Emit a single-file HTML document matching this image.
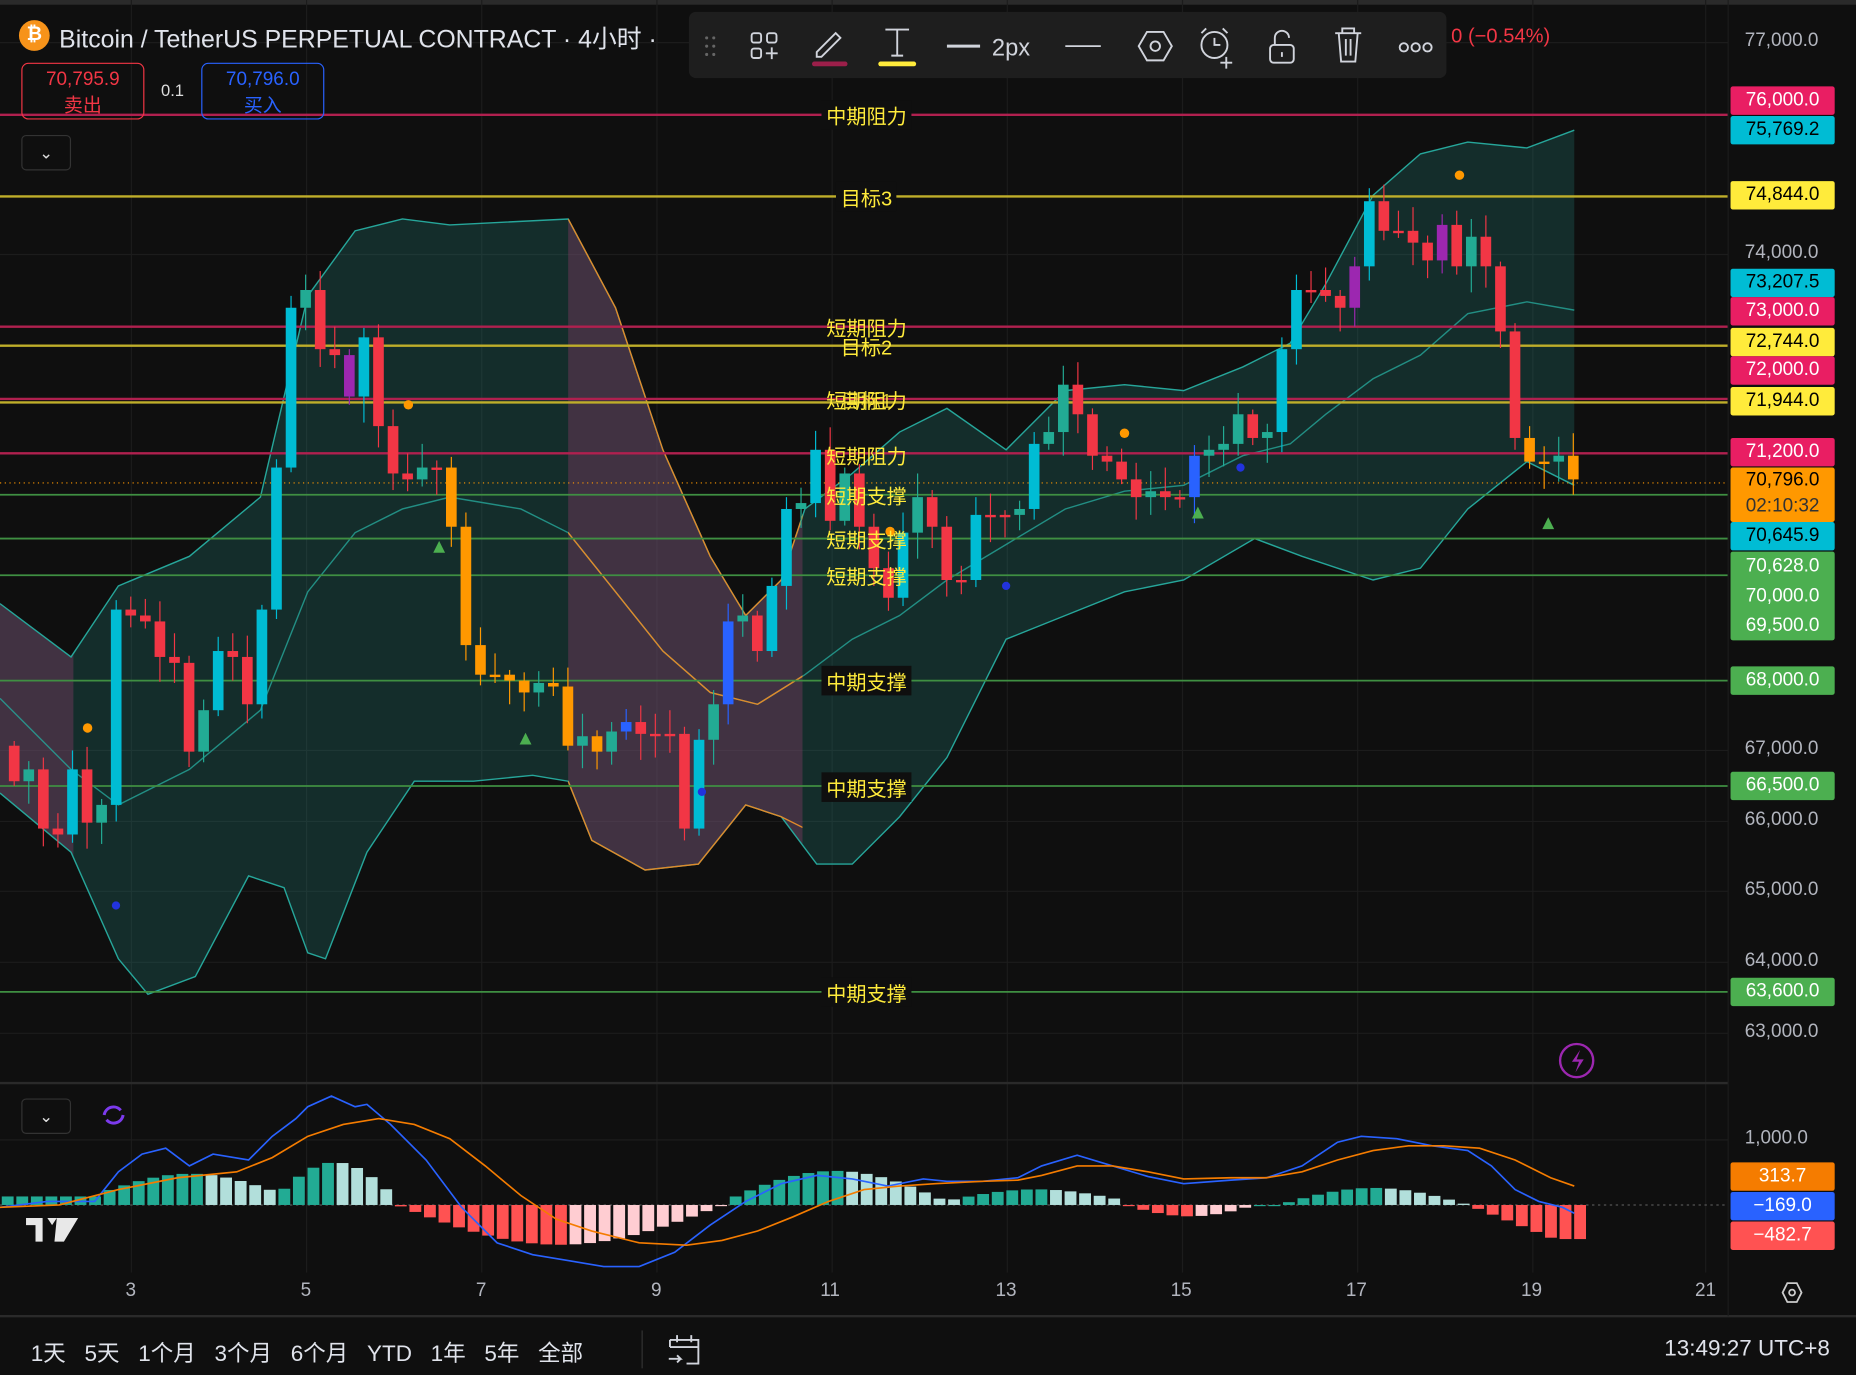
<!DOCTYPE html>
<html><head><meta charset="utf-8"><style>
html,body{margin:0;padding:0;background:#0f0f0f;overflow:hidden}
#w{position:absolute;left:0;top:0;width:1568px;height:1162px;transform:scale(1.18367);transform-origin:0 0;background:#0f0f0f;font-family:"Liberation Sans","Noto Sans CJK SC",sans-serif;color:#d1d4dc}
.t{position:absolute;white-space:nowrap}
.tag{position:absolute;left:1462px;width:88px;height:24px;font-size:16px;line-height:24px;text-align:center;border-radius:2px}
.ax{position:absolute;left:1474px;font-size:16px;color:#b2b5be}
.lb{position:absolute;font-size:17px;color:#ffeb3b;background:#0f0f0f;padding:0 4px;transform:translate(-50%,-50%)}
</style></head><body><div id="w">
<div style="position:absolute;left:0;top:0;width:1568px;height:4px;background:#2a2a2a"></div>
<svg id="s" width="1568" height="1162" style="position:absolute;left:0;top:0">
<g stroke="#1c1c1c" stroke-width="1">
<line x1="111" y1="0" x2="111" y2="1075"/><line x1="259" y1="0" x2="259" y2="1075"/><line x1="407" y1="0" x2="407" y2="1075"/><line x1="555" y1="0" x2="555" y2="1075"/><line x1="703" y1="0" x2="703" y2="1075"/><line x1="851" y1="0" x2="851" y2="1075"/><line x1="999" y1="0" x2="999" y2="1075"/><line x1="1147" y1="0" x2="1147" y2="1075"/><line x1="1295" y1="0" x2="1295" y2="1075"/><line x1="1441" y1="0" x2="1441" y2="1075"/>
<line x1="0" y1="36" x2="1460" y2="36"/><line x1="0" y1="215" x2="1460" y2="215"/><line x1="0" y1="634" x2="1460" y2="634"/><line x1="0" y1="694" x2="1460" y2="694"/><line x1="0" y1="753" x2="1460" y2="753"/><line x1="0" y1="813" x2="1460" y2="813"/><line x1="0" y1="873" x2="1460" y2="873"/><line x1="0" y1="963" x2="1460" y2="963"/>
</g>
<defs>
<clipPath id="pc"><rect x="0" y="0" width="62" height="900"/><rect x="480" y="0" width="198" height="900"/></clipPath>
<path id="band" d="M0,510 L60,555 L100,495 L160,470 L220,420 L260,250 L300,195 L340,185 L380,190 L480,185 L520,260 L560,380 L600,470 L630,520 L660,490 L680,430 L720,400 L760,365 L800,345 L850,380 L900,330 L950,325 L1000,330 L1050,310 L1090,290 L1120,240 L1160,165 L1200,130 L1240,120 L1290,125 L1330,110 L1330,410 L1290,390 L1240,430 L1200,480 L1160,490 L1100,470 L1060,455 L1000,490 L950,500 L900,520 L850,540 L800,640 L760,690 L720,730 L690,730 L660,690 L630,680 L590,730 L545,735 L500,710 L480,660 L450,655 L400,660 L350,660 L310,720 L275,810 L260,805 L240,750 L210,740 L165,825 L125,840 L100,810 L60,720 L0,670 Z"/>
</defs>
<use href="#band" fill="rgba(38,166,154,0.2)"/>
<use href="#band" fill="rgba(150,60,110,0.35)" clip-path="url(#pc)"/>
<g fill="none" stroke-width="1.2">
<path d="M0,510 L60,555 L100,495 L160,470 L220,420 L260,250 L300,195 L340,185 L380,190 L480,185 L520,260 L560,380 L600,470 L630,520 L660,490 L680,430 L720,400 L760,365 L800,345 L850,380 L900,330 L950,325 L1000,330 L1050,310 L1090,290 L1120,240 L1160,165 L1200,130 L1240,120 L1290,125 L1330,110" stroke="#26a69a"/>
<path d="M0,670 L60,720 L100,810 L125,840 L165,825 L210,740 L240,750 L260,805 L275,810 L310,720 L350,660 L400,660 L450,655 L480,660 L500,710 L545,735 L590,730 L630,680 L660,690 L690,730 L720,730 L760,690 L800,640 L850,540 L900,520 L950,500 L1000,490 L1060,455 L1100,470 L1160,490 L1200,480 L1240,430 L1290,390 L1330,410" stroke="#26a69a"/>
<path d="M0,590 L60,650 L100,680 L160,650 L220,600 L260,500 L300,450 L340,430 L380,420 L440,430 L480,450 L520,500 L560,550 L600,585 L640,595 L680,570 L720,540 L760,520 L800,490 L850,460 L900,430 L950,415 L1000,410 L1050,385 L1090,375 L1120,350 L1160,320 L1200,300 L1240,265 L1290,255 L1330,262" stroke="#26a69a" opacity="0.8"/>
<path d="M480,185 L520,260 L560,380 L600,470 L630,520 L660,490 L680,430 M480,660 L500,710 L545,735 L590,730 L630,680 L660,690 L680,700 M300,450 L340,430 L380,420 L440,430 L480,450 L520,500 L560,550 L600,585 L640,595 L680,570" stroke="#e08a2a" clip-path="url(#pc)"/>
</g>
<g stroke-width="2">
<line x1="0" y1="97" x2="1460" y2="97" stroke="#b0204f"/>
<line x1="0" y1="166" x2="1460" y2="166" stroke="#bfae2a"/>
<line x1="0" y1="276" x2="1460" y2="276" stroke="#b0204f"/>
<line x1="0" y1="292" x2="1460" y2="292" stroke="#bfae2a"/>
<line x1="0" y1="337" x2="1460" y2="337" stroke="#b0204f"/>
<line x1="0" y1="340" x2="1460" y2="340" stroke="#bfae2a"/>
<line x1="0" y1="383" x2="1460" y2="383" stroke="#b0204f"/>
<line x1="0" y1="418" x2="1460" y2="418" stroke="#3f8f42" stroke-width="1.5"/>
<line x1="0" y1="455" x2="1460" y2="455" stroke="#3f8f42" stroke-width="1.5"/>
<line x1="0" y1="486" x2="1460" y2="486" stroke="#3f8f42" stroke-width="1.5"/>
<line x1="0" y1="575" x2="1460" y2="575" stroke="#3f8f42" stroke-width="1.5"/>
<line x1="0" y1="664" x2="1460" y2="664" stroke="#3f8f42" stroke-width="1.5"/>
<line x1="0" y1="838" x2="1460" y2="838" stroke="#3f8f42" stroke-width="1.5"/>
<line x1="0" y1="408" x2="1460" y2="408" stroke="#ff9800" stroke-width="1" stroke-dasharray="1,3"/>
<line x1="0" y1="1018" x2="1460" y2="1018" stroke="#555" stroke-width="1" stroke-dasharray="2,3"/>
</g>
<g id="cd"></g>
<g id="mh"></g>
<path d="M0,1020 L40,1015 L80,1015 L100,990 L120,975 L140,970 L160,985 L180,975 L210,980 L230,960 L250,945 L260,935 L280,926 L300,935 L310,933 L330,950 L360,980 L390,1020 L420,1050 L450,1060 L480,1065 L510,1070 L540,1070 L570,1058 L600,1035 L630,1015 L660,1000 L690,993 L720,996 L750,1002 L780,996 L800,998 L830,998 L860,995 L880,985 L910,976 L940,985 L970,994 L1000,1000 L1040,997 L1070,995 L1100,985 L1130,965 L1150,960 L1180,962 L1210,968 L1240,972 L1260,985 L1280,1005 L1300,1015 L1320,1020 L1330,1025" fill="none" stroke="#2962ff" stroke-width="1.4"/>
<path d="M0,1020 L50,1018 L100,1005 L150,995 L200,990 L230,978 L260,960 L290,950 L320,945 L350,950 L380,962 L410,985 L440,1010 L470,1030 L500,1040 L540,1050 L580,1052 L610,1048 L640,1040 L670,1028 L700,1015 L730,1005 L760,1002 L790,1000 L830,998 L860,997 L880,993 L910,985 L940,985 L970,990 L1000,996 L1040,995 L1070,995 L1100,990 L1130,980 L1160,972 L1190,968 L1220,968 L1250,970 L1280,980 L1310,995 L1330,1002" fill="none" stroke="#f57c00" stroke-width="1.4"/>
<g fill="#4caf50"><path d="M371,457 l5,10 h-10z"/><path d="M444,619 l5,10 h-10z"/><path d="M1012,428 l5,10 h-10z"/><path d="M1308,437 l5,10 h-10z"/></g>
<g fill="#ff9800"><circle cx="74" cy="615" r="4"/><circle cx="345" cy="342" r="4"/><circle cx="950" cy="366" r="4"/><circle cx="1233" cy="148" r="4"/><circle cx="752" cy="449" r="4"/></g>
<g fill="#2233dd"><circle cx="98" cy="765" r="3.5"/><circle cx="593" cy="669" r="3.5"/><circle cx="850" cy="495" r="3.5"/><circle cx="1048" cy="395" r="3.5"/></g>
<line x1="0" y1="915" x2="1460" y2="915" stroke="#2a2a2a" stroke-width="2"/>
<line x1="0" y1="1112" x2="1568" y2="1112" stroke="#2a2a2a" stroke-width="2"/>
<line x1="1460" y1="0" x2="1460" y2="1112" stroke="#1c1c1c"/>
<circle cx="1332" cy="896" r="14" fill="none" stroke="#9c27b0" stroke-width="2"/>
<path d="M1335,887 l-7,10 h6 l-3,9 7,-11 h-6z" fill="#9c27b0"/>
<path d="M88,942 a8,8 0 0 1 14,-4 M104,942 a8,8 0 0 1 -14,4" stroke="#7c3aed" stroke-width="2.5" fill="none"/>
<path d="M22,1029 h14 v20 h-6 v-14 h-8z M40,1029 h8 l-4,6z M48,1029 h18 l-12,20 h-8z" fill="#e8e8e8"/>
<path d="M1506,1092 l4,-8 h8 l4,8 -4,8 h-8z" fill="none" stroke="#ccc" stroke-width="1.5"/><circle cx="1514" cy="1092" r="2.5" fill="none" stroke="#ccc" stroke-width="1.5"/>
</svg>
<div class="t" style="left:16px;top:17px;width:26px;height:26px;border-radius:13px;background:#f7931a;color:#fff;font-size:16px;line-height:26px;text-align:center;font-weight:bold">₿</div>
<div class="t" style="left:50px;top:17px;font-size:21px;color:#e0e3eb">Bitcoin / TetherUS PERPETUAL CONTRACT · 4小时 ·</div>
<div class="t" style="left:1226px;top:21px;font-size:17px;color:#f23645">0 (−0.54%)</div>
<div class="t" style="left:18px;top:53px;width:104px;height:48px;border:1px solid #f23645;border-radius:6px;color:#f23645;text-align:center;font-size:16px;line-height:22px;padding-top:3px;box-sizing:border-box">70,795.9<br>卖出</div>
<div class="t" style="left:136px;top:68px;font-size:14px;color:#ddd">0.1</div>
<div class="t" style="left:170px;top:53px;width:104px;height:48px;border:1px solid #2962ff;border-radius:6px;color:#2962ff;text-align:center;font-size:16px;line-height:22px;padding-top:3px;box-sizing:border-box">70,796.0<br>买入</div>
<div class="t" style="left:18px;top:114px;width:40px;height:28px;border:1px solid #333;border-radius:4px;text-align:center;color:#ddd;font-size:14px;line-height:28px">⌄</div>
<div class="t" style="left:18px;top:928px;width:40px;height:28px;border:1px solid #333;border-radius:4px;text-align:center;color:#ddd;font-size:14px;line-height:28px">⌄</div>
<div class="t" style="left:582px;top:10px;width:640px;height:56px;background:#1e1e1e;border-radius:6px"></div>
<svg width="640" height="56" style="position:absolute;left:582px;top:10px" fill="none" stroke="#d1d4dc" stroke-width="1.6">
<g fill="#666" stroke="none"><circle cx="15" cy="22" r="1.3"/><circle cx="21" cy="22" r="1.3"/><circle cx="15" cy="29" r="1.3"/><circle cx="21" cy="29" r="1.3"/><circle cx="15" cy="36" r="1.3"/><circle cx="21" cy="36" r="1.3"/></g>
<rect x="53" y="18" width="8" height="8" rx="2"/><rect x="66" y="18" width="8" height="8" rx="2"/><rect x="53" y="31" width="8" height="8" rx="2"/><path d="M70,30 v10 M65,35 h10"/>
<path d="M108,34 l16,-16 4,4 -16,16 h-4z"/><rect x="104" y="42" width="30" height="4" rx="2" fill="#9c1f4a" stroke="none"/>
<path d="M166,15 h20 M176,15 v22 M171,37 h10"/><rect x="160" y="42" width="32" height="4" rx="2" fill="#ffeb3b" stroke="none"/>
<path d="M218,29 h28" stroke-width="2.5"/>
<text x="256" y="37" fill="#d1d4dc" stroke="none" font-size="20" font-family="Liberation Sans">2px</text>
<path d="M318,29 h30" stroke-width="1.5"/>
<path d="M380,29 l7,-12 h14 l7,12 -7,12 h-14z"/><circle cx="394" cy="29" r="4"/>
<circle cx="444" cy="28" r="11"/><path d="M444,22 v6 h5 M433,18 l4,-4 M455,18 l-4,-4 M454,38 v10 M449,43 h10"/>
<rect x="491" y="28" width="20" height="15" rx="3"/><path d="M495,28 v-6 a6,6 0 0 1 12,0 M501,34 v4"/>
<path d="M546,18 h22 M552,18 v-4 h10 v4 M549,18 l2,24 h12 l2,-24 M555,23 v14 M559,23 v14"/>
<circle cx="604" cy="30" r="3.5"/><circle cx="614" cy="30" r="3.5"/><circle cx="624" cy="30" r="3.5"/>
</svg>
<div class="lb" style="left:732px;top:97px">中期阻力</div>
<div class="lb" style="left:732px;top:166px">目标3</div>
<div class="lb" style="left:732px;top:276px;background:none">短期阻力</div>
<div class="lb" style="left:732px;top:292px;background:none">目标2</div>
<div class="lb" style="left:732px;top:337px;background:none">短期阻力</div>
<div class="lb" style="left:732px;top:337px;background:none;opacity:.8">目标1</div>
<div class="lb" style="left:732px;top:384px;background:none">短期阻力</div>
<div class="lb" style="left:732px;top:418px;background:none">短期支撑</div>
<div class="lb" style="left:732px;top:455px;background:none">短期支撑</div>
<div class="lb" style="left:732px;top:486px;background:none">短期支撑</div>
<div class="lb" style="left:732px;top:575px">中期支撑</div>
<div class="lb" style="left:732px;top:665px">中期支撑</div>
<div class="lb" style="left:732px;top:838px">中期支撑</div>
<div class="ax" style="top:26px">77,000.0</div>
<div class="ax" style="top:205px">74,000.0</div>
<div class="ax" style="top:624px">67,000.0</div>
<div class="ax" style="top:684px">66,000.0</div>
<div class="ax" style="top:743px">65,000.0</div>
<div class="ax" style="top:803px">64,000.0</div>
<div class="ax" style="top:863px">63,000.0</div>
<div class="ax" style="top:953px">1,000.0</div>
<div class="tag" style="top:73px;background:#e91e63;color:#fff">76,000.0</div>
<div class="tag" style="top:98px;background:#00bcd4;color:#000">75,769.2</div>
<div class="tag" style="top:153px;background:#ffeb3b;color:#000">74,844.0</div>
<div class="tag" style="top:227px;background:#00bcd4;color:#000">73,207.5</div>
<div class="tag" style="top:251px;background:#e91e63;color:#fff">73,000.0</div>
<div class="tag" style="top:277px;background:#ffeb3b;color:#000">72,744.0</div>
<div class="tag" style="top:301px;background:#e91e63;color:#fff">72,000.0</div>
<div class="tag" style="top:327px;background:#ffeb3b;color:#000">71,944.0</div>
<div class="tag" style="top:370px;background:#e91e63;color:#fff">71,200.0</div>
<div class="tag" style="top:395px;height:46px;background:#ff9800;color:#000;line-height:22px">70,796.0<br><span style="color:#333">02:10:32</span></div>
<div class="tag" style="top:441px;background:#00bcd4;color:#000">70,645.9</div>
<div class="tag" style="top:466px;height:75px;background:#4caf50;color:#fff;line-height:25px">70,628.0<br>70,000.0<br>69,500.0</div>
<div class="tag" style="top:563px;background:#4caf50;color:#fff">68,000.0</div>
<div class="tag" style="top:652px;background:#4caf50;color:#fff">66,500.0</div>
<div class="tag" style="top:826px;background:#4caf50;color:#fff">63,600.0</div>
<div class="tag" style="top:982px;background:#f57c00;color:#fff">313.7</div>
<div class="tag" style="top:1007px;background:#2962ff;color:#fff">−169.0</div>
<div class="tag" style="top:1032px;background:#ff5252;color:#fff">−482.7</div>
<div class="t" style="top:1082px;left:106px;font-size:16px;color:#b2b5be">3</div>
<div class="t" style="top:1082px;left:254px;font-size:16px;color:#b2b5be">5</div>
<div class="t" style="top:1082px;left:402px;font-size:16px;color:#b2b5be">7</div>
<div class="t" style="top:1082px;left:550px;font-size:16px;color:#b2b5be">9</div>
<div class="t" style="top:1082px;left:693px;font-size:16px;color:#b2b5be">11</div>
<div class="t" style="top:1082px;left:841px;font-size:16px;color:#b2b5be">13</div>
<div class="t" style="top:1082px;left:989px;font-size:16px;color:#b2b5be">15</div>
<div class="t" style="top:1082px;left:1137px;font-size:16px;color:#b2b5be">17</div>
<div class="t" style="top:1082px;left:1285px;font-size:16px;color:#b2b5be">19</div>
<div class="t" style="top:1082px;left:1432px;font-size:16px;color:#b2b5be">21</div>
<div class="t" style="top:1129px;left:26px;font-size:19px;color:#e0e3eb">1天&nbsp;&nbsp; 5天&nbsp;&nbsp; 1个月&nbsp;&nbsp; 3个月&nbsp;&nbsp; 6个月&nbsp;&nbsp; YTD&nbsp;&nbsp; 1年&nbsp;&nbsp; 5年&nbsp;&nbsp; 全部</div>
<div class="t" style="top:1124px;left:542px;width:1px;height:32px;background:#333"></div>
<svg width="34" height="34" style="position:absolute;left:562px;top:1124px" fill="none" stroke="#d1d4dc" stroke-width="1.6"><path d="M4,8 h24 v20 h-10 M4,8 v6 M4,14 h24 M10,4 v6 M22,4 v6 M3,24 h10 l-3,-3 M13,24 l-3,3"/></svg>
<div class="t" style="top:1129px;left:1406px;font-size:19px;color:#e0e3eb">13:49:27 UTC+8</div>
</div>
<script>
var ys=[660,650,700,705,650,695,680,515,520,525,555,560,635,600,550,555,595,515,395,260,245,295,300,335,285,360,400,405,395,395,445,545,570,570,575,585,577,580,630,622,635,618,610,620,620,620,700,625,595,525,520,550,495,430,425,380,440,400,445,480,505,450,420,445,490,490,435,435,435,430,375,365,325,350,385,390,405,420,415,420,420,385,380,375,350,370,365,295,245,245,250,260,225,170,195,195,205,220,190,225,200,225,280,370,390,390,385,405];
var g=document.getElementById('cd'),prev=630,s='';
for(var i=0;i<ys.length;i++){var x=12+i*12.31,o=prev,c=ys[i],up=c<o;
var col=up?((o-c)>40?'#00bcd4':'#22ab94'):((x>375&&x<520)||x>1280?'#ff9800':'#f23645');
if(i==23||i==92||i==98)col='#9c27b0';if(i==49||i==81||i==42)col='#2962ff';
var t=Math.min(o,c),b=Math.max(o,c);if(b-t<2)b=t+2;
var wt=t-4-((i*37)%17),wb=b+4+((i*53)%19);
s+='<line x1="'+x+'" x2="'+x+'" y1="'+wt+'" y2="'+wb+'" stroke="'+col+'" stroke-width="1"/><rect x="'+(x-4.5)+'" y="'+t+'" width="9" height="'+(b-t)+'" fill="'+col+'"/>';prev=c;}
g.innerHTML=s;
var h=document.getElementById('mh'),hs='',hv=[];
for(var x=6;x<1337;x+=12.3){var v;
if(x<90)v=6;else if(x<230)v=10+12*Math.sin((x-90)/140*Math.PI);else if(x<335)v=26*Math.sin((x-230)/105*Math.PI)+4;
else if(x<610)v=-28*Math.sin((x-335)/275*Math.PI);else if(x<800)v=22*Math.sin((x-610)/190*Math.PI)+2;
else if(x<950)v=3+8*Math.sin((x-800)/150*Math.PI);else if(x<1060)v=-8*Math.sin((x-950)/110*Math.PI);
else if(x<1080)v=0;else if(x<1240)v=12*Math.sin((x-1080)/160*Math.PI);else v=-Math.min(24,(x-1240)*0.33);hv.push([x,v]);}
for(var k=0;k<hv.length;k++){var x=hv[k][0],v=hv[k][1],p=k?hv[k-1][1]:0,col;
if(v>=0)col=v>=p?'#22ab94':'#b2dfdb';else col=v<=p?'#ff5252':'#ffcdd2';
var y0=1018,yv=1018-v*1.2;hs+='<rect x="'+(x-4.5)+'" y="'+Math.min(y0,yv)+'" width="10" height="'+Math.max(1,Math.abs(yv-y0))+'" fill="'+col+'"/>';}
h.innerHTML=hs;
</script>
</body></html>
